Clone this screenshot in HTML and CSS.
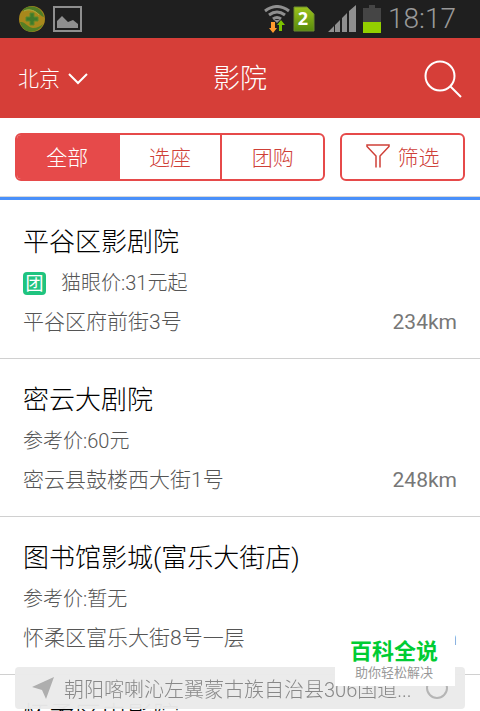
FILE: index.html
```html
<!DOCTYPE html>
<html lang="zh-CN">
<head>
    <meta charset="UTF-8">
    <meta name="viewport" content="width=device-width, initial-scale=1.0">
    <title>影院</title>
    <link rel="stylesheet" href="styles.css">
</head>
<body>

    <div class="app">
        <div class="status-bar">
            <div class="status-left">
                <svg width="26" height="26" viewBox="0 0 26 26">
                    <circle cx="13" cy="13" r="13" fill="#a8881c"/>
                    <path d="M3 5 C9 -3 23 0 25 11 C21 10 19 5 12 4 C8 3 5 5 3 5Z" fill="#4f7d26"/>
                    <path d="M1 16 C6 15 8 21 14 22 C18 22 22 20 24 18 C20 27 5 30 1 16Z" fill="#557f24"/>
                    <path d="M5 5 C10 2 17 5 20 9" stroke="#a9ae45" stroke-width="1" fill="none"/>
                    <path d="M11 7h4v4h4v4h-4v4h-4v-4H7v-4h4z" fill="#3f7a2b" stroke="#5d8a2a" stroke-width="1"/>
                </svg>
                <svg width="29" height="26" viewBox="0 0 29 26">
                    <rect x="1" y="1" width="27" height="24" fill="none" stroke="#8f8f8f" stroke-width="2"/>
                    <path d="M4 22V15L9 10L15 16L20 14L25 18V22Z" fill="#8f8f8f"/>
                </svg>
            </div>
            <div class="status-right">
                <svg width="26" height="28" viewBox="0 0 26 28">
                    <g fill="none" stroke="#8f8f8f" stroke-width="3">
                        <path d="M1 6Q13 -3 25 6"/>
                        <path d="M5 10Q13 4 21 10"/>
                        <path d="M9 14Q13 11 17 14"/>
                    </g>
                    <path d="M10 15h6l-3 3z" fill="#8f8f8f"/>
                    <path d="M7 17h4v6h2l-4 5l-4 -5h2z" fill="#ff9a2e"/>
                    <path d="M15 26h3v-6h3l-4 -5l-4 5h2z" fill="#7cc300"/>
                </svg>
                <svg class="sim-icon" width="22" height="26" viewBox="0 0 22 26">
                    <defs>
                        <linearGradient id="simGreen" x1="0" y1="0" x2="0" y2="1">
                            <stop offset="0" stop-color="#9cc31c"/>
                            <stop offset="1" stop-color="#578a0c"/>
                        </linearGradient>
                    </defs>
                    <path d="M1 1H14L21 8V25H1Z" fill="url(#simGreen)" stroke="#6d8a2e" stroke-width="1"/>
                    <text x="10" y="19" class="sim-number">2</text>
                </svg>
                <svg class="signal-icon" width="28" height="28" viewBox="0 0 28 28">
                    <path d="M0 27L6 21V27ZM7 27V20L12 15V27ZM14 27V13L19 8V27ZM21 27V6L28 0V27Z" fill="#8f8f8f"/>
                </svg>
                <svg class="battery-icon" width="18" height="28" viewBox="0 0 18 28">
                    <path d="M0 3h6V0h6v3h6v25H0z" fill="#454545"/>
                    <path d="M0 17h18v11H0z" fill="#93cf00"/>
                </svg>
                <span class="clock">18:17</span>
            </div>
        </div>

        <header class="header">
            <button class="city-btn" type="button">
                北京
                <svg width="20" height="12" viewBox="0 0 20 12">
                    <path d="M1 1L10 10L19 1" fill="none" stroke="#fff" stroke-width="2"/>
                </svg>
            </button>
            <h1 class="title">影院</h1>
            <button class="search-btn" type="button" aria-label="搜索">
                <svg width="38" height="38" viewBox="0 0 38 38">
                    <g fill="none" stroke="#fff" stroke-width="2">
                        <circle cx="16" cy="16" r="14.5"/>
                        <path d="M26 26L37 37"/>
                    </g>
                </svg>
            </button>
        </header>

        <div class="filter-bar">
            <div class="tabs">
                <button class="tab active" type="button">全部</button>
                <button class="tab" type="button">选座</button>
                <button class="tab" type="button">团购</button>
            </div>
            <button class="filter-btn" type="button">
                <svg width="24" height="24" viewBox="0 0 24 24">
                    <path d="M10 23.500V12L1 2.500V1H23V2.500L14 12V23.500" fill="none" stroke="#cf4038" stroke-width="1.500"/>
                </svg>
                筛选
            </button>
        </div>

        <ul class="cinema-list">
            <li class="cinema">
                <h2 class="name">平谷区影剧院</h2>
                <p class="price"><span class="tag">团</span>猫眼价:31元起</p>
                <p class="address"><span>平谷区府前街3号</span><span class="distance">234km</span></p>
            </li>
            <li class="cinema">
                <h2 class="name">密云大剧院</h2>
                <p class="price">参考价:60元</p>
                <p class="address"><span>密云县鼓楼西大街1号</span><span class="distance">248km</span></p>
            </li>
            <li class="cinema">
                <h2 class="name">图书馆影城(富乐大街店)</h2>
                <p class="price">参考价:暂无</p>
                <p class="address"><span>怀柔区富乐大街8号一层</span><span class="distance">252km</span></p>
            </li>
            <li class="cinema">
                <h2 class="name">怀柔区电影院</h2>
            </li>
        </ul>
    </div>

    <!-- current location -->
    <div class="location-bar">
        <svg width="22" height="22" viewBox="0 0 22 22">
            <path d="M22 0L14 22L10 13L0 10Z" fill="#aeaeae"/>
        </svg>
        <span class="location-text">朝阳喀喇沁左翼蒙古族自治县306国道...</span>
        <button class="refresh-btn" type="button" aria-label="刷新">
            <svg width="24" height="24" viewBox="0 0 24 24">
                <circle cx="12" cy="12" r="10" fill="none" stroke="#b5b5b5" stroke-width="2"/>
            </svg>
        </button>
    </div>

    <div class="watermark">
        <strong>百科全说</strong>
        <span>助你轻松解决</span>
    </div>

</body>
</html>
```
FILE: styles.css
```css
* {
    box-sizing: border-box;
}

body {
    margin: 0;
    background: #fff;
    color: #555;
    font-family: Roboto, "Noto Sans CJK SC", sans-serif;
    font-weight: 300;
}

button {
    font: inherit;
    color: inherit;
    background: none;
    border: none;
    padding: 0;
    cursor: pointer;
}

svg {
    display: block;
    flex: none;
}

.app {
    height: 100vh;
    overflow: hidden;
}

.status-bar {
    display: flex;
    justify-content: space-between;
    align-items: center;
    height: 38px;
    padding: 0 24px 0 19px;
    background: #1f1f1f;
}

.status-left,
.status-right {
    display: flex;
    align-items: center;
}

.status-left {
    gap: 8px;
}

.sim-icon {
    margin-left: 3px;
}

.sim-number {
    fill: #fff;
    font-family: "Open Sans", sans-serif;
    font-size: 18px;
    font-weight: 700;
    text-anchor: middle;
}

.signal-icon {
    margin-left: 13px;
}

.battery-icon {
    margin-left: 7px;
}

.clock {
    margin-left: 7px;
    font-size: 28px;
    line-height: 38px;
    color: #999;
}

.header {
    display: grid;
    grid-template-columns: 1fr auto 1fr;
    align-items: center;
    height: 80px;
    padding: 2px 18px 0;
    background: #d63e38;
    color: #fff;
}

.city-btn {
    display: flex;
    align-items: center;
    gap: 8px;
    justify-self: start;
    font-size: 21px;
    line-height: 30px;
}

.title {
    margin: 0;
    font-size: 27px;
    line-height: 38px;
    font-weight: 300;
}

.search-btn {
    justify-self: end;
}

.filter-bar {
    display: flex;
    gap: 15px;
    padding: 15px 15px 16px;
    border-bottom: 3px solid #4a90fa;
    box-shadow: inset 0 -1px #d8d8d8;
}

.tabs {
    display: flex;
    flex: 1;
    height: 48px;
    border: 2px solid #e64a4a;
    border-radius: 6px;
    overflow: hidden;
}

.tab {
    flex: 1;
    padding-bottom: 2px;
    font-size: 21px;
    color: #cf4038;
}

.tab + .tab {
    border-left: 2px solid #e64a4a;
}

.tab.active {
    background: #e64a4a;
    color: #fff;
}

.filter-btn {
    display: flex;
    align-items: center;
    justify-content: center;
    gap: 8px;
    width: 125px;
    padding-bottom: 2px;
    border: 2px solid #e64a4a;
    border-radius: 6px;
    font-size: 21px;
    color: #cf4038;
}

.cinema-list {
    margin: 0;
    padding: 1px 0 0;
    list-style: none;
}

.cinema {
    padding: 23px 23px 17px;
    border-bottom: 1px solid #d0d0d0;
}

.name {
    margin: 0 0 3px;
    font-size: 26px;
    line-height: 36px;
    font-weight: 300;
    color: #000;
}

.price {
    display: flex;
    align-items: center;
    margin: 0;
    font-size: 20px;
    line-height: 40px;
}

.tag {
    width: 23px;
    margin-right: 15px;
    border-radius: 4px;
    background: #1fc47f;
    color: #fff;
    font-size: 18px;
    font-weight: 400;
    line-height: 23px;
    text-align: center;
}

.address {
    display: flex;
    justify-content: space-between;
    margin: 0;
    font-size: 21px;
    line-height: 38px;
}

.distance {
    font-weight: 400;
    color: #777;
}

.location-bar {
    position: fixed;
    left: 15px;
    right: 15px;
    bottom: 2px;
    display: flex;
    align-items: center;
    gap: 10px;
    height: 42px;
    padding: 0 16px 0 17px;
    border-radius: 4px;
    background: rgba(234, 234, 234, 0.97);
    color: #888;
    font-size: 20px;
}

.location-text {
    flex: 1;
    white-space: nowrap;
}

.watermark {
    position: fixed;
    right: 25px;
    bottom: 25px;
    display: flex;
    flex-direction: column;
    align-items: center;
    width: 120px;
    padding: 14px 2px 6px 0;
    background: #fff;
}

.watermark strong {
    font-size: 22px;
    line-height: 28px;
    font-weight: 700;
    color: #00cc33;
}

.watermark span {
    font-size: 13px;
    line-height: 14px;
    font-weight: 400;
    color: #999;
}
```
